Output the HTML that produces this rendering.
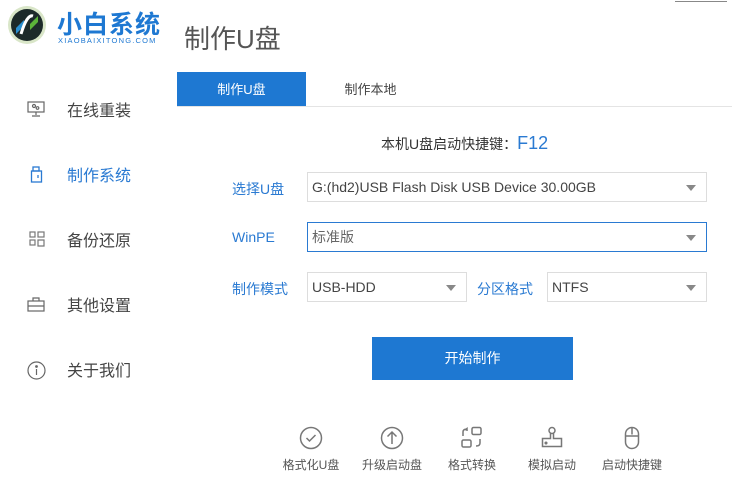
<!DOCTYPE html>
<html><head><meta charset="utf-8"><style>
*{margin:0;padding:0;box-sizing:border-box}
body{width:732px;height:488px;background:#fff;position:relative;overflow:hidden;font-family:"Liberation Sans","Noto Sans CJK SC",sans-serif;color:#333}
.a{position:absolute}
.nav{position:absolute;left:67px;font-size:16px;color:#444}
.ic{position:absolute;left:27px}
.lbl{position:absolute;left:232px;font-size:14px;color:#2a7ad2}
.sel{position:absolute;border:1px solid #ddd;height:30px;font-size:14px;color:#444;padding-left:4px;line-height:28px}
.sel:after{content:"";position:absolute;right:10px;top:12px;border-left:5px solid transparent;border-right:5px solid transparent;border-top:6px solid #888}
.bi{position:absolute;top:426px;width:80px;text-align:center;font-size:12px;color:#555}
.bi svg{display:block;margin:0 auto 6px}
</style></head><body>
<svg class="a" style="left:6px;top:4px" width="42" height="42" viewBox="0 0 42 42">
<circle cx="21" cy="21" r="19" fill="#d9e6c8"/><circle cx="21" cy="21" r="16" fill="#1d2a2a"/>
<path d="M10 24 L18 16 L18 22 L10 30Z" fill="#2a8fd0"/><path d="M32 18 L24 26 L24 20 L32 12Z" fill="#5cb33a"/>
<path d="M15 30 Q21 10 27 12" stroke="#fff" stroke-width="3" fill="none"/></svg>
<div class="a" style="left:57px;top:5px;font-size:25px;font-weight:bold;color:#1e78d2;letter-spacing:1px">小白系统</div>
<div class="a" style="left:58px;top:36px;font-size:7.5px;color:#1e78d2;letter-spacing:1.2px">XIAOBAIXITONG.COM</div>
<div class="a" style="left:184px;top:19px;font-size:26px;color:#555">制作U盘</div>
<div class="a" style="left:675px;top:-10px;width:52px;border-bottom:1px solid #888;height:12px"></div>

<svg class="ic" style="top:101px" width="18" height="16" viewBox="0 0 18 16" fill="none" stroke="#666" stroke-width="1.2"><rect x="1" y="1" width="16" height="10"/><path d="M9 11v3M5 15h8"/><circle cx="7" cy="5" r="1.5"/><circle cx="10.5" cy="7" r="1.3"/></svg>
<div class="nav" style="top:97px">在线重装</div>
<svg class="ic" style="top:166px;left:30px" width="14" height="18" viewBox="0 0 14 18" fill="none" stroke="#2a7ad2" stroke-width="1.3"><rect x="3" y="1" width="6" height="4"/><rect x="1.5" y="5" width="10" height="11"/><path d="M8 9v3"/></svg>
<div class="nav" style="top:162px;color:#2a7ad2">制作系统</div>
<svg class="ic" style="top:231px;left:29px" width="16" height="16" viewBox="0 0 16 16" fill="none" stroke="#777" stroke-width="1.2"><rect x="1" y="1" width="5" height="5"/><rect x="9" y="1" width="6" height="5"/><rect x="1" y="9" width="5" height="5"/><path d="M9 9h6v6h-6z"/></svg>
<div class="nav" style="top:227px">备份还原</div>
<svg class="ic" style="top:297px" width="18" height="15" viewBox="0 0 18 15" fill="none" stroke="#666" stroke-width="1.2"><rect x="1" y="4" width="16" height="10"/><path d="M6 4V1h6v3M1 9h16"/></svg>
<div class="nav" style="top:292px">其他设置</div>
<svg class="ic" style="top:361px" width="19" height="19" viewBox="0 0 19 19" fill="none" stroke="#666" stroke-width="1.2"><circle cx="9.5" cy="9.5" r="8.5"/><path d="M9.5 8v6"/><circle cx="9.5" cy="5.5" r=".8" fill="#666"/></svg>
<div class="nav" style="top:357px">关于我们</div>

<div class="a" style="left:177px;top:72px;width:129px;height:34px;background:#1e78d2;color:#fff;font-size:13px;text-align:center;line-height:36px">制作U盘</div>
<div class="a" style="left:306px;top:72px;width:129px;height:34px;color:#444;font-size:13px;text-align:center;line-height:36px">制作本地</div>
<div class="a" style="left:177px;top:106px;width:555px;height:1px;background:#e4e4e4"></div>

<div class="a" style="left:381px;top:133px;font-size:14px;color:#333">本机U盘启动快捷键：<span style="color:#2a7ad2;font-size:18px">F12</span></div>

<div class="lbl" style="top:179px">选择U盘</div>
<div class="sel" style="left:307px;top:172px;width:400px">G:(hd2)USB Flash Disk USB Device 30.00GB</div>
<div class="lbl" style="top:229px">WinPE</div>
<div class="sel" style="left:307px;top:222px;width:400px;border-color:#2a7ad2;color:#666">标准版</div>
<div class="lbl" style="top:279px">制作模式</div>
<div class="sel" style="left:307px;top:272px;width:160px">USB-HDD</div>
<div class="lbl" style="left:477px;top:279px">分区格式</div>
<div class="sel" style="left:547px;top:272px;width:160px">NTFS</div>

<div class="a" style="left:372px;top:337px;width:201px;height:43px;background:#1e78d2;color:#fff;font-size:14px;text-align:center;line-height:43px">开始制作</div>

<div class="bi" style="left:271px"><svg width="24" height="24" viewBox="0 0 24 24" fill="none" stroke="#777" stroke-width="1.5"><circle cx="12" cy="12" r="10.5"/><path d="M7.5 12l3 3 6-6"/></svg>格式化U盘</div>
<div class="bi" style="left:352px"><svg width="24" height="24" viewBox="0 0 24 24" fill="none" stroke="#777" stroke-width="1.5"><circle cx="12" cy="12" r="10.5"/><path d="M12 18V6M7.5 10.5L12 6l4.5 4.5"/></svg>升级启动盘</div>
<div class="bi" style="left:432px"><svg width="24" height="24" viewBox="0 0 24 24" fill="none" stroke="#777" stroke-width="1.5"><rect x="12" y="1.5" width="9" height="7" rx="1.5"/><rect x="2" y="14" width="9" height="7" rx="1.5"/><path d="M3 10V6q0-3 4-3M5 4l2-1.5L7 5"/><path d="M20 13v4q0 3-4 3"/></svg>格式转换</div>
<div class="bi" style="left:512px"><svg width="24" height="24" viewBox="0 0 24 24" fill="none" stroke="#777" stroke-width="1.5"><circle cx="12" cy="4.5" r="3"/><path d="M10.5 7.5v5h-8v8h19v-8h-8v-5"/><circle cx="6" cy="17" r=".8" fill="#777"/></svg>模拟启动</div>
<div class="bi" style="left:592px"><svg width="24" height="24" viewBox="0 0 24 24" fill="none" stroke="#777" stroke-width="1.5"><rect x="5.5" y="1.5" width="13" height="21" rx="6.5"/><path d="M12 1.5v7M5.5 10h13"/></svg>启动快捷键</div>
</body></html>
